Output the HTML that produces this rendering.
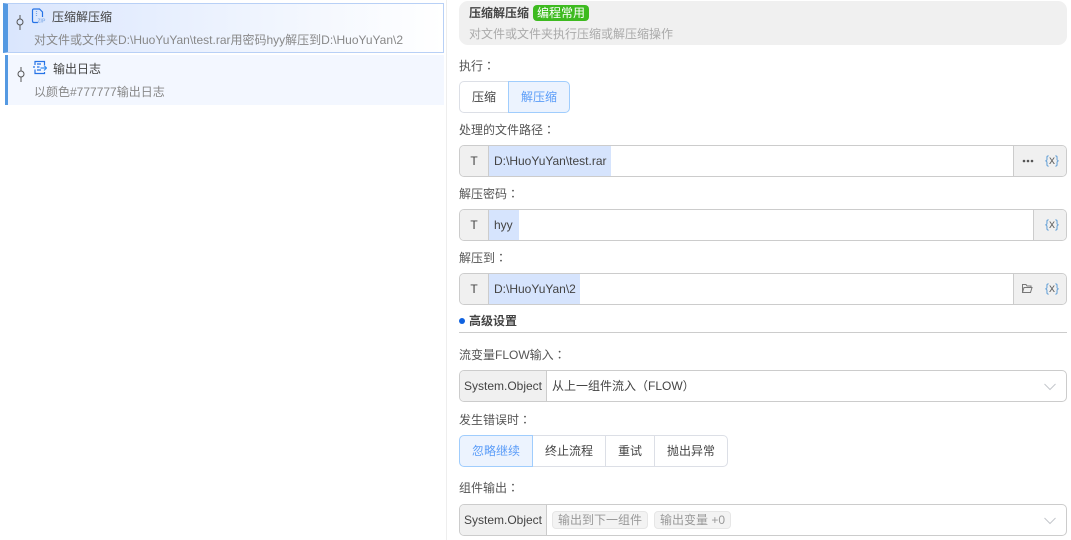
<!DOCTYPE html>
<html lang="zh"><head><meta charset="utf-8"><style>
html,body{margin:0;padding:0;width:1071px;height:540px;overflow:hidden;background:#fff}
body{position:relative;font:12px/16px "Liberation Sans","Noto Sans CJK SC",sans-serif;color:#333}
.a{position:absolute;white-space:nowrap;box-sizing:border-box}
.l{position:absolute;left:459px;color:#555;white-space:nowrap;height:16px}
.c{font-family:"Noto Sans CJK TC",sans-serif}
.inp{position:absolute;left:459px;width:608px;height:32px;border:1px solid #ccc;border-radius:5px;box-sizing:border-box;overflow:hidden;background:#fff}
.t{position:absolute;left:0;top:0;bottom:0;width:28px;background:#f0f0f0;border-right:1px solid #ccc;text-align:center;line-height:30px;color:#444;box-sizing:content-box}
.t2{width:86px;white-space:nowrap}
.v{position:absolute;left:29px;top:0;bottom:0;background:#d6e4fd;padding:0 4px 0 5px;line-height:30px;color:#444;white-space:nowrap}
.sfx{position:absolute;right:0;top:0;bottom:0;background:#f0f0f0;border-left:1px solid #ccc;box-sizing:border-box}
.x{position:absolute;right:7px;top:0;line-height:29px;font-size:12px;color:#666}
.x b{font-weight:normal;color:#5b9bd5}
.sel{position:absolute;left:92px;top:0;line-height:30px;color:#444;white-space:nowrap}
.chev{position:absolute;right:9px;top:12px}
.btn{position:absolute;height:32px;line-height:30px;text-align:center;box-sizing:border-box;border:1px solid #dcdfe6;background:#fff;color:#444}
.on{background:#ecf3fe;border-color:#a0cdfd;color:#5a9cf8}
.tag{position:absolute;top:6px;height:18px;line-height:17px;background:#f3f3f3;border:1px solid #e6e6e6;border-radius:4px;color:#999;padding:0 5px;box-sizing:border-box;white-space:nowrap}
</style></head><body>
<div class="a" style="left:3px;top:3px;width:441px;height:50px;background:linear-gradient(90deg,#dae6fd,#fff);border:1px solid #b8d0f6;border-left:5px solid #5499e2"></div>
<div class="a" style="left:5px;top:55px;width:439px;height:50px;background:#f3f7ff;border-left:3px solid #5499e2"></div>
<svg class="a" style="left:14px;top:14px" width="12" height="18" fill="none" stroke="#555" stroke-width="1"><path d="M6 1V5M6 11V16"/><circle cx="6" cy="8" r="3"/></svg>
<svg class="a" style="left:15px;top:66px" width="12" height="18" fill="none" stroke="#555" stroke-width="1"><path d="M6 1V5M6 11V16"/><circle cx="6" cy="8" r="3"/></svg>
<svg class="a" style="left:31px;top:8px" width="15" height="16" fill="none" stroke="#2673e6" stroke-width="1.200"><path d="M7 14.500H3Q1.500 14.500 1.500 13V2.500Q1.500 1 3 1H8.500L11.500 4V9"/><path d="M5.500 3V9" stroke-dasharray="1 1" stroke="#7aa8ea"/><text x="6.500" y="14.500" font-size="5" font-family="Liberation Sans" font-weight="bold" stroke="none" fill="#8bb2ea">ZIP</text></svg>
<svg class="a" style="left:32px;top:60px" width="15" height="15" fill="none" stroke="#2673e6" stroke-width="1.200"><path d="M3 5V1.500H12.500V5M3 9.500V13.500H12.500V12"/><path d="M1 7H3M5 4H9M5 7H7.500M5 10H9"/><path d="M8.500 8H14.500M12 5.500L14.500 8L12 10.500" stroke="#3b8ff0"/></svg>
<div class="a" style="left:52px;top:9px;color:#444">压缩解压缩</div>
<div class="a" style="left:34px;top:32px;color:#888">对文件或文件夹D:\HuoYuYan\test.rar用密码hyy解压到D:\HuoYuYan\2</div>
<div class="a" style="left:53px;top:61px;color:#444">输出日志</div>
<div class="a" style="left:34px;top:84px;color:#888">以颜色#777777输出日志</div>
<div class="a" style="left:446px;top:0;width:1px;height:540px;background:#eee"></div>

<div class="a" style="left:459px;top:1px;width:608px;height:44px;background:#f0f0f0;border-radius:9px"></div>
<div class="a" style="left:469px;top:5px;color:#444;font-weight:bold">压缩解压缩</div>
<div class="a" style="left:533px;top:5px;width:56px;height:16px;background:#3dba1f;border-radius:4px;color:#fff;text-align:center;line-height:16px">编程常用</div>
<div class="a" style="left:469px;top:26px;color:#aaa">对文件或文件夹执行压缩或解压缩操作</div>

<div class="l" style="top:58px">执行<span class="c" lang="zh-TW">：</span></div>
<div class="btn" style="left:459px;top:81px;width:50px;border-radius:5px 0 0 5px">压缩</div>
<div class="btn on" style="left:508px;top:81px;width:62px;border-radius:0 5px 5px 0">解压缩</div>

<div class="l" style="top:122px">处理的文件路径<span class="c" lang="zh-TW">：</span></div>
<div class="inp" style="top:145px"><div class="t">T</div><div class="v">D:\HuoYuYan\test.rar</div>
<div class="sfx" style="width:53px"><svg class="a" style="left:8px;top:13px" width="12" height="4" fill="#555"><circle cx="2" cy="2" r="1.300"/><circle cx="6" cy="2" r="1.300"/><circle cx="10" cy="2" r="1.300"/></svg><div class="x"><b>{</b>x<b>}</b></div></div></div>

<div class="l" style="top:186px">解压密码<span class="c" lang="zh-TW">：</span></div>
<div class="inp" style="top:209px"><div class="t">T</div><div class="v" style="padding-right:6px">hyy</div>
<div class="sfx" style="width:33px"><div class="x"><b>{</b>x<b>}</b></div></div></div>

<div class="l" style="top:250px">解压到<span class="c" lang="zh-TW">：</span></div>
<div class="inp" style="top:273px"><div class="t">T</div><div class="v">D:\HuoYuYan\2</div>
<div class="sfx" style="width:53px"><svg class="a" style="left:7px;top:9px" width="12" height="11" fill="none" stroke="#777"><path d="M1.500 9.500V1.500H5L6 3H10V4.500M1.500 9.500H9.500L11 4.500H3Z"/></svg><div class="x"><b>{</b>x<b>}</b></div></div></div>

<div class="a" style="left:459px;top:318px;width:6px;height:6px;border-radius:50%;background:#0f62e0"></div>
<div class="a" style="left:469px;top:313px;color:#444;font-weight:bold">高级设置</div>
<div class="a" style="left:459px;top:332px;width:608px;height:1px;background:#ccc"></div>

<div class="l" style="top:347px">流变量FLOW输入<span class="c" lang="zh-TW">：</span></div>
<div class="inp" style="top:370px"><div class="t t2" style="width:86px">System.Object</div><div class="sel">从上一组件流入（FLOW）</div>
<svg class="a chev" width="14" height="8" fill="none" stroke="#c4c7cc"><path d="M1.500 1L7 6.500L12.500 1"/></svg></div>

<div class="l" style="top:412px">发生错误时<span class="c" lang="zh-TW">：</span></div>
<div class="btn on" style="left:459px;top:435px;width:74px;border-radius:5px 0 0 5px;z-index:1">忽略继续</div>
<div class="btn" style="left:532px;top:435px;width:74px">终止流程</div>
<div class="btn" style="left:605px;top:435px;width:50px">重试</div>
<div class="btn" style="left:654px;top:435px;width:74px;border-radius:0 5px 5px 0">抛出异常</div>

<div class="l" style="top:480px">组件输出<span class="c" lang="zh-TW">：</span></div>
<div class="inp" style="top:504px"><div class="t t2" style="width:86px">System.Object</div>
<div class="tag" style="left:92px">输出到下一组件</div><div class="tag" style="left:194px">输出变量 +0</div>
<svg class="a chev" width="14" height="8" fill="none" stroke="#c4c7cc"><path d="M1.500 1L7 6.500L12.500 1"/></svg></div>
</body></html>
